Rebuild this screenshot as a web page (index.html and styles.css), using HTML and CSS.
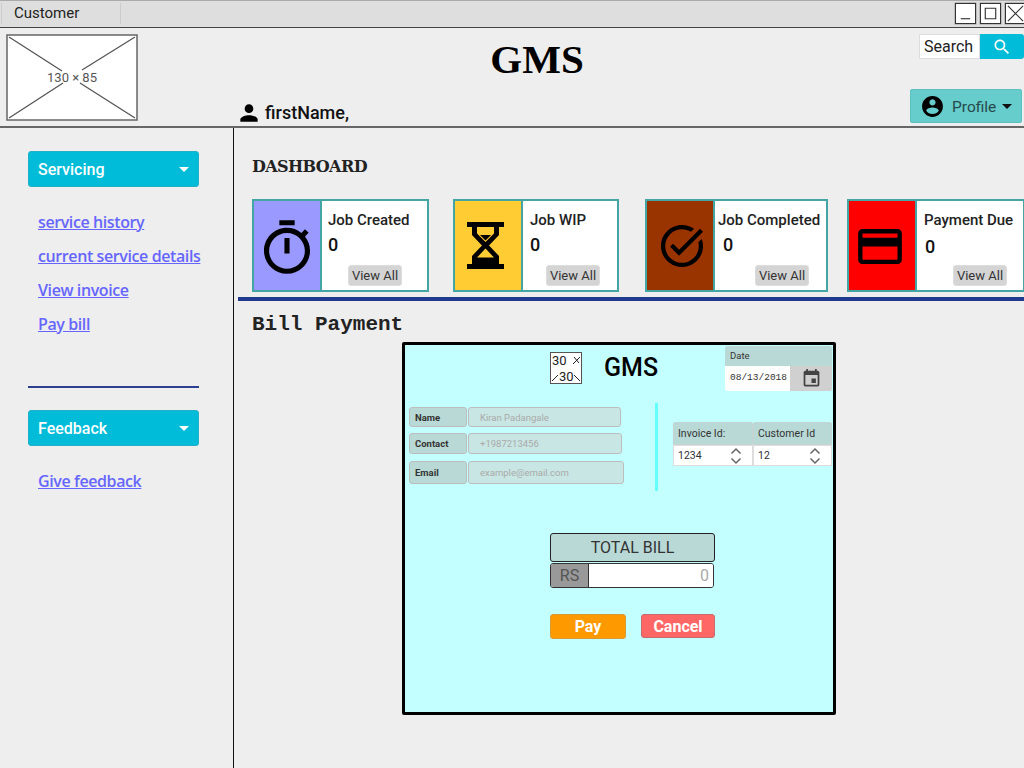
FILE: index.html
```html
<!DOCTYPE HTML>
<html>
<head>
  <meta charset="UTF-8">
  <title>GMS</title>
  <link rel="stylesheet" href="styles.css">
</head>
<body>
  <div class="titlebar">
    <div class="tab">Customer</div>
    <div class="win-buttons">
      <span class="win-btn"><svg viewBox="0 0 20 20"><path d="M5 15.5h10" /></svg></span>
      <span class="win-btn"><svg viewBox="0 0 20 20"><path d="M4.5 4.5h11v11h-11z" /></svg></span>
      <span class="win-btn"><svg viewBox="0 0 20 20"><path d="M2 2l16 16M18 2L2 18" /></svg></span>
    </div>
  </div>

  <div class="header">
    <svg class="logo" viewBox="0 0 132 87">
      <rect x="1" y="1" width="130" height="85" fill="#fff" stroke="#666" stroke-width="1.500" />
      <path d="M3 3L56 37M129 3L76 36M3 84L57 49M129 84L74 49" stroke="#555" stroke-width="1.300" fill="none" />
      <text x="66" y="48" text-anchor="middle" class="logo-text">130 × 85</text>
    </svg>
    <div class="header-mid">
      <h1 class="brand">GMS</h1>
      <div class="user">
        <svg class="user-icon" viewBox="0 0 24 24"><path d="M12 12c2.21 0 4-1.79 4-4s-1.79-4-4-4-4 1.79-4 4 1.79 4 4 4zm0 2c-2.67 0-8 1.34-8 4v2h16v-2c0-2.66-5.33-4-8-4z" /></svg>
        <span>firstName,</span>
      </div>
    </div>
    <div class="header-right">
      <div class="search">
        <span class="search-input">Search</span>
        <span class="search-btn"><svg viewBox="0 0 24 24"><path d="M15.5 14h-.79l-.28-.27C15.41 12.59 16 11.11 16 9.5 16 5.91 13.09 3 9.5 3S3 5.91 3 9.5 5.91 16 9.5 16c1.61 0 3.09-.59 4.23-1.57l.27.28v.79l5 4.99L20.49 19l-4.99-5zm-6 0C7.01 14 5 11.99 5 9.5S7.01 5 9.5 5 14 7.01 14 9.5 11.99 14 9.5 14z" /></svg></span>
      </div>
      <button class="profile">
        <svg viewBox="0 0 24 24"><path d="M12 2C6.48 2 2 6.48 2 12s4.48 10 10 10 10-4.48 10-10S17.52 2 12 2zm0 3c1.66 0 3 1.34 3 3s-1.34 3-3 3-3-1.34-3-3 1.34-3 3-3zm0 14.2c-2.5 0-4.71-1.28-6-3.22.03-1.99 4-3.08 6-3.08 1.99 0 5.97 1.09 6 3.08-1.29 1.94-3.5 3.22-6 3.22z" /></svg>
        <span>Profile</span>
        <i class="caret"></i>
      </button>
    </div>
  </div>

  <div class="content">
    <div class="sidebar">
      <button class="side-btn">Servicing<i class="caret"></i></button>
      <ul class="side-links">
        <li><a href="#">service history</a></li>
        <li><a href="#">current service details</a></li>
        <li><a href="#">View invoice</a></li>
        <li><a href="#">Pay bill</a></li>
      </ul>
      <hr class="side-rule">
      <button class="side-btn">Feedback<i class="caret"></i></button>
      <ul class="side-links">
        <li><a href="#">Give feedback</a></li>
      </ul>
    </div>

    <div class="main">
      <h2 class="dash-title">DASHBOARD</h2>
      <div class="cards">
        <div class="card card-created">
          <div class="card-icon icon-purple">
            <svg class="ic-timer" viewBox="3 1 18 21"><path d="M15 1H9v2h6V1zm-4 13h2V8h-2v6zm8.03-6.61l1.42-1.42c-.43-.51-.9-.99-1.41-1.41l-1.42 1.42C16.07 4.74 14.12 4 12 4c-4.97 0-9 4.03-9 9s4.02 9 9 9 9-4.03 9-9c0-2.12-.74-4.07-1.97-5.61zM12 20c-3.87 0-7-3.13-7-7s3.13-7 7-7 7 3.13 7 7-3.13 7-7 7z" /></svg>
          </div>
          <div class="card-body">
            <div class="card-title">Job Created</div>
            <div class="card-num">0</div>
            <button class="view-all">View All</button>
          </div>
        </div>
        <div class="card card-wip">
          <div class="card-icon icon-yellow">
            <svg class="ic-glass" viewBox="0 0 37 47">
              <path d="M0 0h37v5H0zM0 42h37v5H0z" />
              <path d="M5 4v9l10 10.500L5 34v9h27v-9L22 23.500 32 13V4zM10 5h17v6.500L18.500 20 10 11.500z" fill-rule="evenodd" />
              <path d="M13 13h11l-5.500 5.500z" />
              <path d="M10 35.500l8.500-9 8.500 9z" fill="#ffcc33" />
            </svg>
          </div>
          <div class="card-body">
            <div class="card-title">Job WIP</div>
            <div class="card-num">0</div>
            <button class="view-all">View All</button>
          </div>
        </div>
        <div class="card card-done">
          <div class="card-icon icon-brown">
            <svg class="ic-check" viewBox="2 2 20 20"><path d="M22 5.180L10.590 16.600l-4.240-4.240 1.410-1.410 2.830 2.830 10-10L22 5.180zm-2.210 5.040c.13.570.21 1.170.21 1.780 0 4.420-3.580 8-8 8s-8-3.580-8-8 3.580-8 8-8c1.580 0 3.040.460 4.280 1.250l1.440-1.440C16.100 2.670 14.130 2 12 2 6.480 2 2 6.480 2 12s4.480 10 10 10 10-4.480 10-10c0-1.190-.220-2.330-.600-3.390l-1.610 1.610z" /></svg>
          </div>
          <div class="card-body">
            <div class="card-title">Job Completed</div>
            <div class="card-num">0</div>
            <button class="view-all">View All</button>
          </div>
        </div>
        <div class="card card-due">
          <div class="card-icon icon-red">
            <svg class="ic-card" viewBox="2 4 20 16"><path d="M20 4H4c-1.110 0-1.990.890-1.990 2L2 18c0 1.110.890 2 2 2h16c1.110 0 2-.890 2-2V6c0-1.110-.890-2-2-2zm0 14H4v-6h16v6zm0-10H4V6h16v2z" /></svg>
          </div>
          <div class="card-body">
            <div class="card-title">Payment Due</div>
            <div class="card-num">0</div>
            <button class="view-all">View All</button>
          </div>
        </div>
      </div>
      <div class="main-rule"></div>
      <h2 class="bill-title">Bill Payment</h2>

      <div class="bill">
        <div class="bill-top">
          <svg class="bill-logo" viewBox="0 0 32 32">
            <rect x="0.5" y="0.5" width="31" height="31" fill="#fff" stroke="#555" />
            <path d="M2 29l6-6M30 29l-6-6M30 5l-7 7M24 5l5 6" stroke="#222" fill="none" />
            <text x="2" y="13" class="bill-logo-text">30</text>
            <text x="9" y="29" class="bill-logo-text">30</text>
          </svg>
          <div class="bill-brand">GMS</div>
          <div class="date-box">
            <div class="date-label">Date</div>
            <div class="date-row">
              <span class="date-value">08/13/2018</span>
              <span class="date-pick"><svg viewBox="0 0 24 24"><path d="M17 12h-5v5h5v-5zM16 1v2H8V1H6v2H5c-1.110 0-1.990.900-1.990 2L3 19c0 1.100.890 2 2 2h14c1.100 0 2-.900 2-2V5c0-1.100-.900-2-2-2h-1V1h-2zm3 18H5V8h14v11z" /></svg></span>
            </div>
          </div>
        </div>

        <div class="bill-mid">
          <div class="contact">
            <div class="contact-row row-name">
              <span class="contact-label">Name</span>
              <span class="contact-input">Kiran Padangale</span>
            </div>
            <div class="contact-row row-contact">
              <span class="contact-label">Contact</span>
              <span class="contact-input">+1987213456</span>
            </div>
            <div class="contact-row row-email">
              <span class="contact-label">Email</span>
              <span class="contact-input">example@email.com</span>
            </div>
          </div>
          <div class="divider"></div>
          <div class="ids">
            <div class="id-col">
              <div class="id-label">Invoice Id:</div>
              <div class="id-value">1234<svg viewBox="0 0 12 18"><path d="M1.500 6.500L6 2l4.500 4.500M1.500 11.500L6 16l4.500-4.500" /></svg></div>
            </div>
            <div class="id-col">
              <div class="id-label">Customer Id</div>
              <div class="id-value">12<svg viewBox="0 0 12 18"><path d="M1.500 6.500L6 2l4.500 4.500M1.500 11.500L6 16l4.500-4.500" /></svg></div>
            </div>
          </div>
        </div>

        <div class="total">
          <div class="total-head">TOTAL BILL</div>
          <div class="total-row">
            <span class="total-rs">RS</span>
            <span class="total-val">0</span>
          </div>
        </div>

        <div class="bill-actions">
          <button class="btn-pay">Pay</button>
          <button class="btn-cancel">Cancel</button>
        </div>
      </div>
    </div>
  </div>
</body>
</html>
```

FILE: styles.css
```css
* {
  box-sizing: border-box;
}
html, body {
  height: 100%;
}
body {
  margin: 0;
  height: 768px;
  overflow: hidden;
  display: flex;
  flex-direction: column;
  font-family: Roboto, sans-serif;
  background-color: #eeeeee;
  color: #222;
}
button {
  font-family: Roboto, sans-serif;
  cursor: pointer;
}
svg {
  display: block;
}

/* title bar */
.titlebar {
  height: 28px;
  flex: none;
  display: flex;
  justify-content: space-between;
  background-color: #dedede;
  border-top: 1px solid #aaa;
  border-bottom: 1px solid #444;
  padding-left: 1px;
}
.tab {
  width: 120px;
  height: 21px;
  margin-top: 2px;
  padding-left: 12px;
  font-size: 15px;
  line-height: 21px;
  color: #222;
  border-left: 1px solid #ccc;
  border-right: 1px solid #ccc;
}
.win-buttons {
  display: flex;
  gap: 4px;
  padding-top: 2px;
  margin-right: -2px;
}
.win-btn {
  width: 21px;
  height: 21px;
  background: #fff;
  border: 1px solid #333;
  box-shadow: 0 0 0 0.500px #999;
}
.win-btn svg {
  width: 19px;
  height: 19px;
  fill: none;
  stroke: #333;
  stroke-width: 1.200;
}

/* header */
.header {
  height: 100px;
  flex: none;
  display: flex;
  padding: 6px 2px 0 6px;
  border-bottom: 2px solid #666;
  background-color: #eeeeee;
}
.logo {
  width: 132px;
  height: 87px;
}
.logo-text {
  font: 13px Roboto, sans-serif;
  fill: #555;
}
.header-mid {
  flex: 1;
  padding-left: 102px;
}
.brand {
  margin: 0;
  text-align: center;
  width: 594px;
  font-family: "Liberation Serif", serif;
  font-size: 41px;
  line-height: 50px;
  font-weight: bold;
  color: #000;
}
.user {
  display: flex;
  align-items: center;
  gap: 3px;
  margin-top: 16px;
  font-size: 18px;
  font-weight: 500;
  color: #111;
  line-height: 24px;
}
.user-icon {
  width: 26px;
  height: 26px;
  margin-left: -4px;
}
.header-right {
  width: 114px;
  flex: none;
  display: flex;
  flex-direction: column;
  align-items: flex-end;
}
.search {
  display: flex;
  height: 25px;
  width: 105px;
  margin-right: -2px;
}
.search-input {
  width: 61px;
  background: #fff;
  border: 1px solid #ddd;
  font-size: 16px;
  line-height: 23px;
  padding-left: 4px;
  color: #222;
}
.search-btn {
  flex: 1;
  background: #00bcd8;
  display: flex;
  align-items: center;
  justify-content: center;
  border-radius: 0 3px 3px 0;
}
.search-btn svg {
  width: 20px;
  height: 20px;
  fill: #fff;
}
.profile {
  width: 112px;
  height: 34px;
  margin-top: 30px;
  padding: 0 0 0 9px;
  display: flex;
  align-items: center;
  background: #66cccc;
  border: 1px solid #5cc0c0;
  color: #2b4a4a;
  font-size: 15.500px;
  border-radius: 2px;
}
.profile svg {
  width: 25px;
  height: 25px;
  fill: #000;
  flex: none;
}
.profile span {
  margin-left: 7px;
  padding-top: 1px;
  color: #254a4a;
}
.profile .caret {
  margin-left: 6px;
  border-top-color: #111;
}
.caret {
  display: inline-block;
  width: 0;
  height: 0;
  border-left: 5px solid transparent;
  border-right: 5px solid transparent;
  border-top: 5px solid #fff;
}

/* sidebar + main */
.content {
  flex: 1;
  display: flex;
  min-height: 0;
}
.sidebar {
  width: 234px;
  flex: none;
  border-right: 1px solid #111;
  padding: 23px 34px 0 28px;
}
.side-btn {
  width: 171px;
  height: 36px;
  display: flex;
  align-items: center;
  justify-content: space-between;
  padding: 0 9px;
  background: #00bcd8;
  border: 1px solid #22b0c6;
  border-radius: 3px;
  color: #fff;
  font-size: 16px;
  font-weight: 500;
}
.side-links {
  list-style: none;
  margin: 18px 0 0;
  padding: 0 0 0 10px;
}
.side-links li {
  height: 34px;
  white-space: nowrap;
  line-height: 34px;
}
.side-links a {
  color: #6666ff;
  font-family: "Open Sans", sans-serif;
  font-size: 16px;
  font-weight: 600;
  letter-spacing: -0.400px;
}
.side-rule {
  width: 171px;
  height: 2px;
  margin: 45px 0 22px;
  border: none;
  background: #2d4090;
}
.main {
  flex: 1;
  min-width: 0;
  padding-top: 27px;
}
.dash-title {
  margin: 0 0 0 18px;
  font-family: "DejaVu Serif", serif;
  font-size: 16px;
  line-height: 24px;
  font-weight: bold;
  letter-spacing: -0.600px;
  color: #222;
}
.cards {
  display: flex;
  margin: 20px 0 0 18px;
  height: 93px;
}
.card {
  flex: none;
  display: flex;
  height: 93px;
  background: #fff;
  border: 2px solid #44a5a5;
}
.card-created {
  width: 177px;
}
.card-wip {
  width: 166px;
  margin-left: 24px;
}
.card-done {
  width: 183px;
  margin-left: 26px;
}
.card-due {
  width: 178px;
  margin-left: 19px;
}
.card-icon {
  flex: none;
  width: 68px;
  display: flex;
  align-items: center;
  justify-content: center;
  border-right: 2px solid #44a5a5;
}
.icon-purple {
  background: #9999ff;
}
.icon-yellow {
  background: #ffcc33;
}
.icon-brown {
  background: #993300;
}
.icon-red {
  background: #ff0000;
}
.ic-timer {
  width: 46px;
  height: 54px;
  margin-top: 2px;
}
.ic-glass {
  width: 37px;
  height: 47px;
  margin-right: 6px;
}
.ic-check {
  width: 42px;
  height: 42px;
  margin-left: 3px;
}
.ic-card {
  width: 44px;
  height: 35px;
  margin: 2px 4px 0 0;
}
.card-body {
  flex: 1;
  position: relative;
  padding: 10px 0 0 6px;
}
.card-wip .card-body {
  padding-left: 7px;
}
.card-done .card-body {
  padding-left: 3px;
}
.card-due .card-body {
  padding-left: 7px;
}
.card-title {
  font-size: 15px;
  font-weight: 500;
  line-height: 18px;
  color: #222;
  white-space: nowrap;
}
.card-num {
  font-size: 18px;
  font-weight: 500;
  line-height: 22px;
  margin-top: 5px;
  color: #111;
}
.card-done .card-num {
  margin-left: 5px;
}
.card-due .card-num {
  margin: 7px 0 0 1px;
}
.view-all {
  position: absolute;
  right: 25px;
  bottom: 4px;
  height: 21px;
  width: 54px;
  padding: 0;
  background: #d4d4d4;
  border: 1px solid #ddd;
  border-radius: 3px;
  color: #333;
  font-size: 13px;
  white-space: nowrap;
}
.card-wip .view-all {
  right: 17px;
}
.card-done .view-all {
  right: 17px;
}
.card-due .view-all {
  right: 16px;
}
.main-rule {
  height: 4px;
  margin: 5px 0 0 4px;
  background: #1f3a8f;
}
.bill-title {
  margin: 12px 0 0 18px;
  font-family: "Liberation Mono", monospace;
  font-size: 21px;
  line-height: 24px;
  font-weight: bold;
  color: #222;
}

/* bill form */
.bill {
  width: 434px;
  height: 373px;
  margin: 5px 0 0 168px;
  background: #c4ffff;
  border: 3px solid #000;
  border-radius: 2px;
  padding: 2px 0 0 4px;
}
.bill-top {
  display: flex;
  height: 57px;
}
.bill-logo {
  width: 32px;
  height: 32px;
  margin: 5px 0 0 141px;
}
.bill-logo-text {
  font: 13px Roboto, sans-serif;
  fill: #222;
}
.bill-brand {
  width: 143px;
  padding-left: 22px;
  font-size: 25px;
  font-weight: 500;
  line-height: 32px;
  margin-top: 5px;
  color: #000;
}
.date-box {
  width: 107px;
  height: 45px;
  margin-top: -1px;
  border-radius: 2px;
  overflow: hidden;
}
.date-label {
  height: 20px;
  background: #b9d9d6;
  font-size: 9.500px;
  line-height: 20px;
  padding-left: 5px;
  color: #333;
}
.date-row {
  display: flex;
  height: 25px;
}
.date-value {
  width: 65px;
  background: #fff;
  font-family: "Liberation Mono", monospace;
  font-size: 9.500px;
  line-height: 24px;
  padding-left: 5px;
  color: #333;
  white-space: nowrap;
  border-radius: 0 0 0 2px;
}
.date-pick {
  flex: 1;
  background: #d0d0d0;
  display: flex;
  align-items: center;
  justify-content: center;
}
.date-pick svg {
  width: 21px;
  height: 21px;
  fill: #444;
}
.bill-mid {
  display: flex;
  height: 90px;
}
.contact {
  width: 246px;
  font-size: 9.500px;
}
.contact-row {
  display: flex;
  gap: 1px;
  margin-bottom: 6px;
}
.row-name {
  height: 20px;
  width: 212px;
  margin-top: 3px;
}
.row-contact {
  height: 21px;
  width: 213px;
}
.row-email {
  height: 23px;
  width: 215px;
  margin-top: 7px;
}
.contact-label {
  width: 58px;
  flex: none;
  background: #b9d9d6;
  border: 1px solid #bdbdbd;
  border-radius: 3px;
  display: flex;
  align-items: center;
  padding-left: 5px;
  font-weight: 700;
  color: #333;
}
.contact-input {
  flex: 1;
  background: #c8e6e3;
  border: 1px solid #bdbdbd;
  border-radius: 3px;
  display: flex;
  align-items: center;
  padding-left: 11px;
  color: #aaa;
}
.divider {
  width: 3px;
  height: 88px;
  margin-top: -1px;
  background: #66ffff;
}
.ids {
  display: flex;
  margin: 18px 0 0 15px;
  height: 45px;
}
.id-col {
  width: 80px;
}
.id-col + .id-col {
  width: 79px;
}
.id-label {
  height: 23px;
  background: #b9d9d6;
  border: 1px solid #c4d4d4;
  border-radius: 2px 2px 0 0;
  font-size: 10.500px;
  line-height: 21px;
  padding-left: 4px;
  color: #333;
  white-space: nowrap;
}
.id-value {
  height: 21px;
  display: flex;
  align-items: center;
  justify-content: space-between;
  background: #fff;
  border: 1px solid #ddd;
  font-size: 10.500px;
  padding: 0 10px 0 4px;
  color: #333;
}
.id-value svg {
  width: 12px;
  height: 18px;
  fill: none;
  stroke: #666;
  stroke-width: 1.500;
}
.total {
  width: 165px;
  margin: 39px 0 0 141px;
}
.total-head {
  height: 29px;
  background: #b9d9d6;
  border: 1px solid #222;
  border-radius: 3px;
  font-size: 16px;
  line-height: 27px;
  text-align: center;
  color: #333;
}
.total-row {
  display: flex;
  height: 25px;
  width: 164px;
  margin-top: 1px;
  border: 1px solid #333;
  border-radius: 3px;
  overflow: hidden;
  font-size: 16px;
}
.total-rs {
  width: 38px;
  background: #999;
  color: #555;
  text-align: center;
  line-height: 23px;
  border-right: 1px solid #333;
}
.total-val {
  flex: 1;
  background: #fff;
  color: #aaa;
  text-align: right;
  line-height: 23px;
  padding-right: 4px;
}
.bill-actions {
  display: flex;
  margin: 26px 0 0 141px;
}
.bill-actions button {
  border-radius: 3px;
  color: #fff;
  font-size: 16px;
  font-weight: 700;
  padding: 0;
}
.btn-pay {
  width: 76px;
  height: 25px;
  background: #ff9900;
  border: 1px solid #d99a33;
}
.btn-cancel {
  width: 74px;
  height: 24px;
  margin-left: 15px;
  background: #ff6666;
  border: 1px solid #c96a6a;
}
```
